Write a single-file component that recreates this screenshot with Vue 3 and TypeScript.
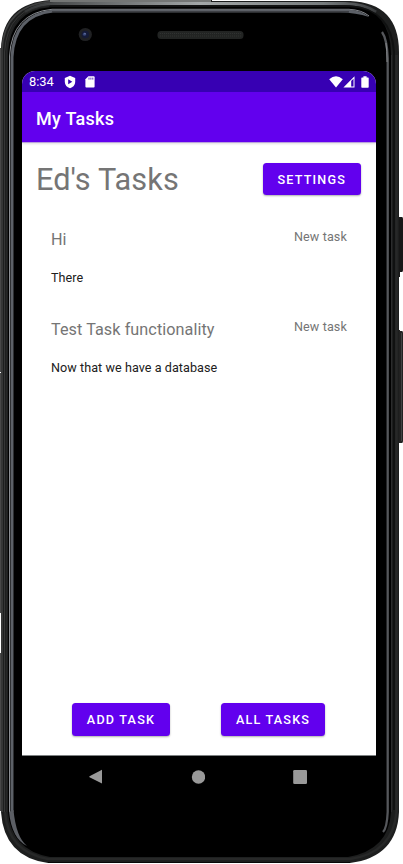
<script setup lang="ts">
interface Task {
  id: number
  title: string
  body: string
  state: string
}

const owner = 'Ed'
const tasks: Task[] = [
  { id: 1, title: 'Hi', body: 'There', state: 'New task' },
  { id: 2, title: 'Test Task functionality', body: 'Now that we have a database', state: 'New task' },
]
</script>

<template>
  <div class="device">
    <svg class="shell" width="403" height="864" viewBox="0 0 403 864" aria-hidden="true">
      <defs>
        <linearGradient id="top" gradientUnits="userSpaceOnUse" x1="25" y1="0" x2="376" y2="0">
          <stop offset="0" stop-color="#333536" />
          <stop offset=".2" stop-color="#626566" />
          <stop offset=".5" stop-color="#a3a7a8" />
          <stop offset=".85" stop-color="#777c7d" />
          <stop offset="1" stop-color="#3a3c3e" />
        </linearGradient>
      </defs>
      <!-- side rails and keys -->
      <path d="M0 48H2V372H0ZM0 373H2V613H0ZM0 653H2V811H0Z" fill="#484848" />
      <path d="M398 217H402Q403 217 403 219V270Q403 272 402 272H400V277H398Z" fill="#171717" />
      <path d="M398 330H400V331H402Q403 331 403 333V441Q403 443 402 443H398Z" fill="#222" />
      <path d="M401.5 333V441" stroke="#414243" />
      <!-- body -->
      <path d="M51 0H212V1H350Q399 3 399 52V812Q397 857 350 863H48Q4 857 1 812V48Q3 3 51 0Z" fill="#1d1e1e" />
      <path d="M2 812V50Q4 6 50 1.5" fill="none" stroke="#3e3f3f" stroke-width="1.5" />
      <path d="M4.5 812V52Q7 7 52 4" fill="none" stroke="#353636" stroke-width="1" />
      <path d="M50 1H211" stroke="#747675" stroke-width="2" />
      <path d="M25 12Q38 4 54 3.5H345Q365 4 376 12" fill="none" stroke="url(#top)" stroke-width="3" />
      <path d="M49 6.2H350Q391 9 394 52V810" fill="none" stroke="#101111" stroke-width="2" />
      <path d="M8 812V54Q10 10 51 7H350Q391 9 391 54V812Q389 850 348 857H50Q11 850 8 812Z" fill="#000" />
      <path d="M6.5 812V50Q10 9 50 5.5" fill="none" stroke="#252626" />
      <path d="M9.5 812V56Q12 13 52 9.3H349Q362 10 369 16" fill="none" stroke="#8b8e93" />
      <path d="M12 812V57Q14 15 53 10.9H340" fill="none" stroke="#5c6067" stroke-width="3" />
      <path d="M340 9.5H349Q362 10.5 369 17Q356 12.4 340 12.4Z" fill="#5c6067" />
      <path d="M52 11.9H349" stroke="#2b2d30" />
      <path d="M9 812Q12 839 27 846Q16 837 13.5 810Z" fill="#5b5e64" />
      <path d="M382 32Q387 39 387.7 58V812Q387 828 383 832" fill="none" stroke="#55575b" stroke-width="2.3" />
      <path d="M386 43Q387 50 387 62" fill="none" stroke="#85878a" />
      <path d="M391.5 55V812" stroke="#2b2c2d" />
      <path d="M396.5 55V812Q393 853 350 859H48Q8 852 5 812" fill="none" stroke="#272828" stroke-width="2.5" />
      <path d="M48 862.5H350" stroke="#080808" />
      <!-- camera and speaker -->
      <circle cx="85.3" cy="34.5" r="6.6" fill="#202123" />
      <circle cx="85.3" cy="34.5" r="3.8" fill="#151b37" />
      <circle cx="84.5" cy="34.2" r="1.6" fill="#354475" />
      <circle cx="85" cy="33.7" r=".6" fill="#8490ba" />
      <rect x="157.5" y="31" width="86" height="8" rx="3.5" fill="#222423" />
      <path d="M160 33.5H241M160 36H241" stroke="#303231" stroke-dasharray="1 1" />
    </svg>

    <main class="screen">
      <header class="status">
        <span class="clock">8:34</span>
        <svg class="shield" width="12" height="14" viewBox="0 0 12 14">
          <path d="M6 .8 11.2 3V7C11.2 10 9 12.3 6 13.2 3 12.3.8 10 .8 7V3Z" fill="#fff" />
          <path d="M4.2 4.3V9.3L8.3 6.8Z" fill="#3700b3" />
        </svg>
        <svg class="card" width="10" height="12" viewBox="0 0 10 12">
          <path d="M3.4.3H8.7Q9.6.3 9.6 1.2V10.5Q9.6 11.5 8.6 11.5H1.4Q.4 11.5.4 10.5V3.2Z" fill="#fff" />
          <path d="M4 1.6V3.6M5.9 1.6V3.6M7.8 1.6V3.6" stroke="#3700b3" stroke-width=".8" />
        </svg>
        <div class="signals">
          <svg width="14" height="12" viewBox="0 0 14 12"><path d="M.2 3.2Q7-2.7 13.8 3.2L7 11.5Z" fill="#fff" /></svg>
          <svg width="12" height="12" viewBox="0 0 12 12"><path d="M11.5.3V11.5H.4ZM8.2 5V10.5H10.5V2.7Z" fill="#fff" fill-rule="evenodd" /></svg>
          <svg class="battery" width="8" height="12" viewBox="0 0 8 12"><path d="M2.4.2H5.6V1.4H7Q7.7 1.4 7.7 2.2V10.9Q7.7 11.7 7 11.7H1Q.3 11.7.3 10.9V2.2Q.3 1.4 1 1.4H2.4Z" fill="#fff" /></svg>
        </div>
      </header>
      <div class="appbar">My Tasks</div>
      <section class="content">
        <div class="heading">
          <h1>{{ owner }}'s Tasks</h1>
          <button class="btn settings">SETTINGS</button>
        </div>
        <div class="list">
          <article v-for="task in tasks" :key="task.id" class="task">
            <div class="row">
              <h2>{{ task.title }}</h2>
              <span class="state">{{ task.state }}</span>
            </div>
            <p>{{ task.body }}</p>
          </article>
        </div>
        <div class="actions">
          <button class="btn add">ADD TASK</button>
          <button class="btn all">ALL TASKS</button>
        </div>
      </section>
    </main>

    <nav class="nav">
      <svg width="14" height="16" viewBox="0 0 14 16"><path d="M13 .8V14.6L.5 8.2Q0 7.7.5 7.2Z" fill="#999" /></svg>
      <svg width="14" height="16" viewBox="0 0 14 16"><circle cx="7.5" cy="8" r="6.7" fill="#999" /></svg>
      <svg width="14" height="16" viewBox="0 0 14 16"><rect x="0.2" y="1" width="13.8" height="14" rx="1.3" fill="#999" /></svg>
    </nav>
  </div>
</template>

<style>
body {
  margin: 0;
  background: #fff;
}
</style>

<style scoped>
.device {
  position: relative;
  box-sizing: border-box;
  width: 403px;
  height: 864px;
  padding: 71px 27px 0 22px;
  overflow: hidden;
  font-family: Roboto, sans-serif;
}
.shell {
  position: absolute;
  inset: 0;
}
.screen {
  position: relative;
  display: flex;
  flex-direction: column;
  width: 354px;
  height: 685px;
  box-sizing: border-box;
  border-bottom: 1px solid #7d8182;
  border-radius: 13px 13px 0 0;
  overflow: hidden;
  background: #fff;
}
.status {
  display: flex;
  align-items: center;
  flex: none;
  height: 21px;
  box-sizing: border-box;
  padding: 0 7px;
  background: #3700b3;
  color: #fff;
}
.clock {
  width: 35px;
  font-size: 12.9px;
  line-height: 21px;
}
.shield {
  flex: none;
}
.card {
  flex: none;
  margin-left: 8.5px;
}
.signals {
  display: flex;
  align-items: center;
  margin-left: auto;
}
.battery {
  margin-left: 6px;
}
.appbar {
  flex: none;
  position: relative;
  height: 50px;
  padding: 1px 14px 0;
  box-sizing: border-box;
  background: #6200ee;
  box-shadow: 0 1px 0 #b9a2dc, 0 2px 2px rgba(0, 0, 0, 0.12);
  color: #fff;
  font-size: 18px;
  font-weight: 500;
  line-height: 51px;
  letter-spacing: 0.28px;
}
.content {
  display: flex;
  flex: 1;
  flex-direction: column;
}
.heading {
  display: flex;
  align-items: flex-start;
  justify-content: space-between;
  height: 33px;
  padding: 21px 15px 0 14px;
}
h1 {
  margin: -1px 0 0;
  color: #757575;
  font-size: 30.7px;
  font-weight: 400;
  line-height: 36px;
  letter-spacing: 0.08px;
}
.btn {
  height: 32.5px;
  padding: 0;
  border: 0;
  border-radius: 3.5px;
  background: #6200ee;
  box-shadow: 0 1px 2px rgba(0, 0, 0, 0.32);
  color: #fff;
  font-family: inherit;
  font-size: 12.6px;
  font-weight: 500;
  line-height: 33px;
  letter-spacing: 1.2px;
  text-align: center;
}
.settings {
  width: 98.5px;
  margin-top: -0.5px;
}
.list {
  display: flex;
  flex-direction: column;
  padding: 33px 29px 0;
}
.task {
  height: 90px;
}
.row {
  display: flex;
  justify-content: space-between;
  align-items: flex-start;
}
h2 {
  margin: 0;
  color: #757575;
  font-size: 16.2px;
  font-weight: 400;
  line-height: 22px;
  letter-spacing: 0.07px;
}
.state {
  color: #757575;
  font-size: 12.6px;
  line-height: 16px;
  letter-spacing: 0.12px;
}
p {
  margin: 18px 0 0;
  color: #202020;
  font-size: 12.6px;
  line-height: 18px;
  letter-spacing: 0.06px;
}
.actions {
  display: flex;
  gap: 51px;
  margin: auto 0 19.5px;
  padding-left: 50px;
}
.add {
  width: 98px;
}
.all {
  width: 104px;
}
.nav {
  position: relative;
  display: flex;
  justify-content: space-between;
  padding: 13px 69px 0 67px;
}
</style>
